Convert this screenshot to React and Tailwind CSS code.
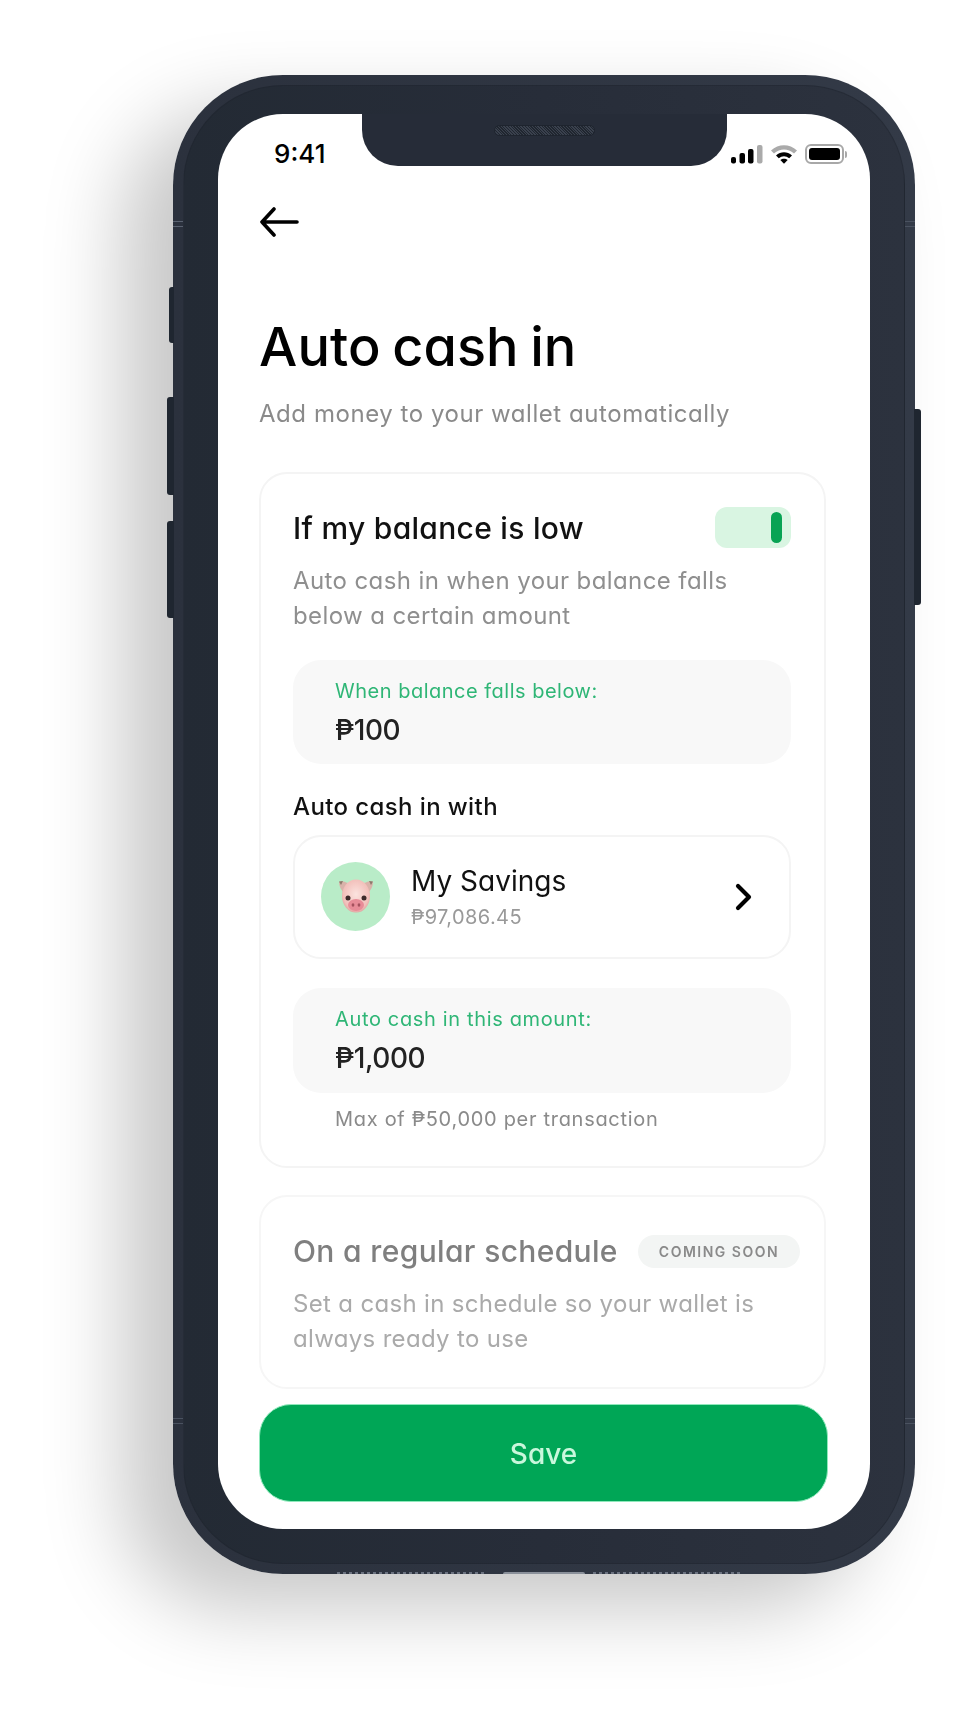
import React from 'react';

const SignalIcon = () => (
    <svg width="32" height="19" viewBox="0 0 32 19">
        <rect x="0" y="12" width="5" height="6.5" rx="2" fill="#000" />
        <rect x="8.5" y="8" width="5.5" height="10.5" rx="2" fill="#000" />
        <rect x="17" y="4" width="5.5" height="14.5" rx="2" fill="#000" />
        <rect x="26" y="0" width="5.5" height="18.5" rx="2" fill="#aaa" />
    </svg>
);

const WifiIcon = () => (
    <svg width="28" height="20" viewBox="0 0 28 20">
        <path d="M1 6.5C8.5 -0.5 19.5 -0.5 27 6.5L24 9.5C18 4 10 4 4 9.5Z" fill="#aaa" />
        <path d="M6 11.5C10.8 7.3 17.2 7.3 22 11.5L19.2 14.3C16 11.5 12 11.5 8.8 14.3Z" fill="#000" />
        <path d="M10.3 16C12.4 14.2 15.6 14.2 17.7 16L14 19.8Z" fill="#000" />
    </svg>
);

const BatteryIcon = () => (
    <div className="flex items-center gap-[1px]">
        <div className="w-[39px] h-[20px] rounded-[6px] border-2 border-[#a8a8a8] p-[2px]">
            <div className="w-full h-full rounded-[3px] bg-black" />
        </div>
        <div className="w-[2px] h-[7px] rounded-r-full bg-[#a8a8a8]" />
    </div>
);

const PigIcon = () => (
    <svg width="38" height="36" viewBox="0 0 38 36">
        <defs>
            <radialGradient id="pigFace" cx="50%" cy="45%" r="60%">
                <stop offset="0%" stopColor="#fbe3df" />
                <stop offset="75%" stopColor="#f2c0bb" />
                <stop offset="100%" stopColor="#dc9a98" />
            </radialGradient>
        </defs>
        <path d="M2 3C6 1 11 3 13 8L7 14C4 11 2 7 2 3Z" fill="#d9b3aa" />
        <path d="M36 3C32 1 27 3 25 8L31 14C34 11 36 7 36 3Z" fill="#d9b3aa" />
        <path d="M2 2.5L6 2L4 6Z" fill="#8d7a6c" />
        <path d="M36 2.5L32 2L34 6Z" fill="#8d7a6c" />
        <ellipse cx="19" cy="17" rx="14" ry="16.5" fill="url(#pigFace)" />
        <circle cx="11" cy="19" r="2.5" fill="#3d2a2a" />
        <circle cx="27" cy="19" r="2.5" fill="#3d2a2a" />
        <ellipse cx="19" cy="26" rx="8" ry="6" fill="#e88c98" />
        <ellipse cx="16" cy="26" rx="1.4" ry="1.8" fill="#a5515e" />
        <ellipse cx="22" cy="26" rx="1.4" ry="1.8" fill="#a5515e" />
    </svg>
);

const AmountField = ({ label, value, className, labelClass }) => (
    <div className={`rounded-[28px] bg-[#f8f8f8] pl-[42px] pt-[18px] ${className}`}>
        <p className={`text-[20px] leading-[26px] text-[#2fb676] ${labelClass}`}>{label}</p>
        <p className="mt-[8px] text-[28px] leading-[36px] font-medium tracking-[-0.4px] text-[#222]">{value}</p>
    </div>
);

export default function App() {
    return (
        <div className="w-[965px] h-[1710px] overflow-hidden bg-white pl-[173px] pt-[75px] font-['Inter',sans-serif] [font-feature-settings:'cv11']">
            <div className="relative w-[742px] h-[1499px] rounded-[110px] bg-gradient-to-r from-[#2b313d] to-[#333a47] pl-[45px] pt-[39px] shadow-[-50px_35px_80px_rgba(0,0,0,0.22)]">
                {/* side buttons */}
                <div className="absolute -left-[4px] top-[212px] w-[5px] h-[56px] rounded-l-[3px] bg-[#1f2630]" />
                <div className="absolute -left-[6px] top-[322px] w-[7px] h-[98px] rounded-l-[3px] bg-[#1f2630]" />
                <div className="absolute -left-[6px] top-[446px] w-[7px] h-[97px] rounded-l-[3px] bg-[#1f2630]" />
                <div className="absolute -right-[6px] top-[334px] w-[7px] h-[196px] rounded-r-[3px] bg-[#1f2630]" />
                {/* inner band */}
                <div className="absolute inset-[10px] rounded-[100px] bg-gradient-to-r from-[#232a34] via-[#272d39] to-[#2c323e] border border-[#1e242e]/40" />
                {/* antenna lines */}
                <div className="absolute left-0 top-[146px] w-[10px] h-[6px] border-y border-[#5a6270]" />
                <div className="absolute right-0 top-[146px] w-[10px] h-[6px] border-y border-[#4a5260]" />
                <div className="absolute left-0 bottom-[150px] w-[10px] h-[6px] border-y border-[#4a5260]" />
                <div className="absolute right-0 bottom-[150px] w-[10px] h-[6px] border-y border-[#4a5260]" />
                {/* bottom speaker and port */}
                <div className="absolute left-[164px] bottom-0 w-[149px] h-[2px] bg-[repeating-linear-gradient(90deg,#6b7280_0,#6b7280_3px,transparent_3px,transparent_6px)]" />
                <div className="absolute left-[330px] bottom-0 w-[82px] h-[2px] rounded-t-full bg-[#8a909a]" />
                <div className="absolute left-[420px] bottom-0 w-[149px] h-[2px] bg-[repeating-linear-gradient(90deg,#6b7280_0,#6b7280_3px,transparent_3px,transparent_6px)]" />

                <div className="relative w-[652px] h-[1415px] rounded-[65px] bg-white overflow-hidden">
                    {/* notch */}
                    <div className="absolute left-[144px] top-0 w-[365px] h-[52px] rounded-b-[36px] bg-[#262c38] flex justify-center pt-[11px]">
                        <div className="w-[101px] h-[11px] rounded-full bg-[repeating-linear-gradient(45deg,#3a414e_0,#3a414e_1px,#20262f_1px,#20262f_2px)] border border-[#1e242e]" />
                    </div>

                    <div className="h-[68px] pt-[26px] pl-[56px] pr-[23px] flex items-start justify-between">
                        <span className="mt-[1px] text-[26px] leading-[26px] font-medium text-black [font-feature-settings:'normal']">9:41</span>
                        <div className="flex items-center gap-[7px] pt-[4px]">
                            <SignalIcon />
                            <WifiIcon />
                            <BatteryIcon />
                        </div>
                    </div>

                    <div className="pl-[41px] blur-[0.5px]">
                        <svg width="40" height="30" viewBox="0 0 40 30" className="mt-[25px] block" fill="none" stroke="#000" strokeWidth="3.6" strokeLinecap="round" strokeLinejoin="round">
                            <path d="M38 15H3M15 2L3 15L15 28" />
                        </svg>

                        <h1 className="mt-[80px] text-[54px] leading-[60px] font-[550] tracking-[0.1px] [word-spacing:-3px] text-black">Auto cash in</h1>
                        <p className="mt-[22px] text-[24px] leading-[30px] tracking-[0.55px] text-[#8a8a8a]">Add money to your wallet automatically</p>

                        <div className="mt-[43px] w-[567px] h-[696px] rounded-[28px] border-2 border-[#f4f4f4] pt-[33px] pl-[32px] pr-[33px]">
                            <div className="flex items-center justify-between h-[41px]">
                                <h2 className="text-[30px] leading-[40px] font-[550] tracking-[0.3px] text-[#111]">If my balance is low</h2>
                                <div className="w-[76px] h-[41px] rounded-[12px] bg-[#d9f5e2] flex items-center justify-end pr-[9px]">
                                    <div className="w-[11px] h-[31px] rounded-full bg-[#08a354]" />
                                </div>
                            </div>
                            <p className="mt-[15px] text-[24px] leading-[35px] tracking-[0.4px] text-[#8f8f8f]">
                                Auto cash in when your balance falls<br />below a certain amount
                            </p>

                            <AmountField label="When balance falls below:" value="₱100" className="mt-[27px] h-[104px]" labelClass="tracking-[0.5px]" />

                            <p className="mt-[28px] text-[24px] leading-[30px] font-[550] tracking-[0.4px] text-[#111]">Auto cash in with</p>

                            <div className="mt-[13px] h-[124px] rounded-[28px] border-2 border-[#f4f4f4] pl-[26px] pr-[36px] flex items-center">
                                <div className="w-[69px] h-[69px] rounded-full bg-[#b9ecc8] flex items-center justify-center -mt-[1px]">
                                    <PigIcon />
                                </div>
                                <div className="ml-[21px] flex-1 -mt-[2px]">
                                    <p className="text-[28px] leading-[36px] text-[#111]">My Savings</p>
                                    <p className="mt-[5px] text-[20px] leading-[26px] tracking-[0.4px] text-[#999]">₱97,086.45</p>
                                </div>
                                <svg width="18" height="28" viewBox="0 0 18 28" className="-mt-[1px]" fill="none" stroke="#000" strokeWidth="4.2" strokeLinecap="round" strokeLinejoin="round">
                                    <path d="M3 3L14 14L3 25" />
                                </svg>
                            </div>

                            <AmountField label="Auto cash in this amount:" value="₱1,000" className="mt-[29px] h-[105px]" labelClass="tracking-[0.65px]" />

                            <p className="mt-[13px] pl-[42px] text-[20px] leading-[26px] tracking-[0.7px] text-[#8a8a8a]">Max of ₱50,000 per transaction</p>
                        </div>

                        <div className="mt-[27px] w-[567px] h-[194px] rounded-[28px] border-2 border-[#f6f6f6] pt-[36px] pl-[32px]">
                            <div className="flex items-center justify-between h-[36px] w-[507px]">
                                <h2 className="text-[30px] leading-[40px] font-[550] tracking-[0.35px] text-[#7f7f7f] whitespace-nowrap">On a regular schedule</h2>
                                <span className="w-[162px] h-[33px] rounded-full bg-[#f3f5f4] flex items-center justify-center text-[14px] font-semibold tracking-[1.5px] text-[#8a8a8a] [font-feature-settings:'normal']">COMING SOON</span>
                            </div>
                            <p className="mt-[17px] text-[24px] leading-[35px] tracking-[0.33px] text-[#aaa]">
                                Set a cash in schedule so your wallet is<br />always ready to use
                            </p>
                        </div>

                        <button className="mt-[15px] w-[569px] h-[98px] pt-[2px] rounded-[32px] bg-[#00a656] border border-[#8fe8bb] text-[28px] font-medium text-[#c9f7dc]">Save</button>
                    </div>
                </div>
            </div>
        </div>
    );
}
